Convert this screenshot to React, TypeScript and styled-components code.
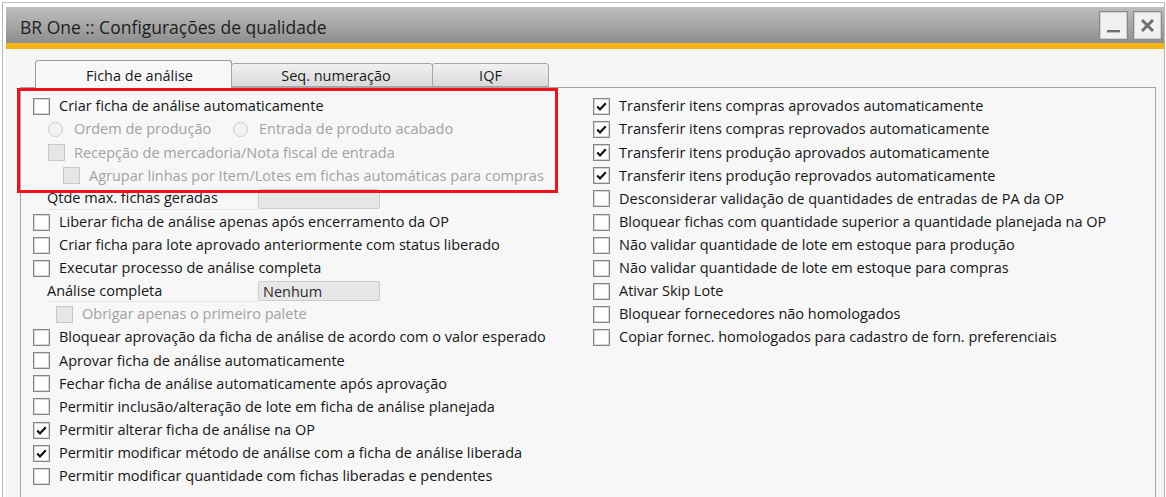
import React from 'react';
import styled, { createGlobalStyle } from 'styled-components';

const Global = createGlobalStyle`
  html, body { margin: 0; padding: 0; background: #ffffff; }
  body { font-family: "Open Sans", "Noto Sans", sans-serif; overflow: hidden; }
  #root { width: 1166px; height: 497px; }
  * { box-sizing: border-box; }
`;

const Window = styled.div`
  margin: 2px 1px 0 2px;
  height: 495px;
  border-left: 1px solid #b6b6b6;
  border-top: 1px solid #c6c6c6;
  border-right: 1px solid #b6b6b6;
  padding: 4px 0 0 3px;
  display: flex;
  flex-direction: column;
  background: #ffffff;
`;

const TitleBar = styled.div`
  height: 42px;
  flex: none;
  display: flex;
  align-items: center;
  padding: 0 2px 0 14px;
  background: linear-gradient(#bebebe, #8e8e8e);
  border-bottom: 6px solid #f5b518;
`;

const Title = styled.div`
  font-size: 17.5px;
  color: #1e1e1e;
  padding-top: 4px;
`;

const WinButtons = styled.div`
  margin-left: auto;
  display: flex;
  gap: 5px;
  padding-top: 1px;
`;

const WinButton = styled.div`
  width: 29px;
  height: 29px;
  background: #f1f1f1;
  border: 1px solid #8a8a8a;
  box-shadow: inset 0 0 0 1px #d0d0d0;
  display: flex;
  align-items: center;
  justify-content: center;
`;

const Body = styled.div`
  flex: 1;
  background: #f5f5f5;
  padding: 11px 8px 0 14px;
  display: flex;
  flex-direction: column;
  min-height: 0;
`;

const TabStrip = styled.div`
  display: flex;
  align-items: flex-end;
  padding-left: 15px;
  height: 28px;
  margin-bottom: -1px;
  position: relative;
  z-index: 1;
`;

const Tab = styled.div<{ $w: number; $active?: boolean; $shift?: number }>`
  width: ${(p) => p.$w}px;
  height: ${(p) => (p.$active ? 28 : 24)}px;
  margin-bottom: ${(p) => (p.$active ? 0 : 1)}px;
  margin-left: ${(p) => (p.$active ? 0 : -1)}px;
  border: 1px solid ${(p) => (p.$active ? '#9c9c9c' : '#a6a6a6')};
  border-bottom: ${(p) => (p.$active ? 'none' : '1px solid #a6a6a6')};
  border-radius: 3px 3px 0 0;
  background: ${(p) => (p.$active ? '#f7f7f7' : 'linear-gradient(#f1f1f1, #dadada)')};
  display: flex;
  align-items: center;
  justify-content: center;
  font-size: 14.5px;
  color: #1a1a1a;
  padding-top: ${(p) => (p.$active ? 1 : 0)}px;
  padding-left: ${(p) => p.$shift ?? 0}px;
`;

const Panel = styled.div`
  flex: 1;
  position: relative;
  border: 1px solid #a3a3a3;
  border-bottom: none;
  background: #f7f7f7;
  display: grid;
  grid-template-columns: 560px 1fr;
  align-content: start;
  padding: 7px 0 0 12px;
`;

const Column = styled.div`
  display: flex;
  flex-direction: column;
`;

const Row = styled.div<{ $indent?: number }>`
  height: 23.12px;
  display: flex;
  align-items: center;
  padding-left: ${(p) => p.$indent ?? 0}px;
  font-size: 14.5px;
  white-space: nowrap;
`;

const Label = styled.span<{ $disabled?: boolean }>`
  color: ${(p) => (p.$disabled ? '#a2a2a2' : '#161616')};
  margin-left: 9px;
  line-height: 1;
`;

const Box = styled.span<{ $disabled?: boolean }>`
  width: 17px;
  height: 17px;
  flex: none;
  border: 1px solid ${(p) => (p.$disabled ? '#c8c8c8' : '#858585')};
  background: ${(p) => (p.$disabled ? '#e6e6e6' : '#ffffff')};
  box-shadow: ${(p) => (p.$disabled ? 'none' : 'inset 0 0 0 1px #d6d6d6')};
  display: flex;
  align-items: center;
  justify-content: center;
`;

const Radio = styled.span`
  width: 15px;
  height: 15px;
  flex: none;
  border-radius: 50%;
  border: 1px solid #c9c9c9;
  background: #f3f3f3;
`;

const RadioOption = styled.span<{ $w?: number }>`
  display: flex;
  align-items: center;
  width: ${(p) => (p.$w ? `${p.$w}px` : 'auto')};
  & > span:last-child { margin-left: 11px; }
`;

const FieldLabel = styled.span`
  width: 211px;
  align-self: stretch;
  display: flex;
  align-items: center;
  color: #161616;
  border-bottom: 1px solid #e4e4e4;
  margin-bottom: 1px;
`;

const Input = styled.span`
  width: 122px;
  height: 20px;
  background: #e7e7e7;
  border: 1px solid #cdcdcd;
  border-radius: 2px;
  display: flex;
  align-items: center;
  padding-left: 4px;
  color: #2a2a2a;
`;

const Highlight = styled.div`
  position: absolute;
  left: -4px;
  top: 0;
  width: 541px;
  height: 105px;
  border: 3px solid #f2121b;
  pointer-events: none;
`;

const Check = () => (
  <svg width="13" height="13" viewBox="0 0 13 13">
    <path d="M2.2 6.6 L5 9.5 L10.8 3.2" fill="none" stroke="#111" strokeWidth="2.2" />
  </svg>
);

type CbProps = { label: string; checked?: boolean; disabled?: boolean; indent?: number };

const CheckRow = ({ label, checked, disabled, indent }: CbProps) => (
  <Row $indent={indent}>
    <Box $disabled={disabled}>{checked && <Check />}</Box>
    <Label $disabled={disabled}>{label}</Label>
  </Row>
);

const FieldRow = ({ label, value }: { label: string; value?: string }) => (
  <Row $indent={14}>
    <FieldLabel>{label}</FieldLabel>
    <Input>{value}</Input>
  </Row>
);

const rightItems: [string, boolean][] = [
  ['Transferir itens compras aprovados automaticamente', true],
  ['Transferir itens compras reprovados automaticamente', true],
  ['Transferir itens produção aprovados automaticamente', true],
  ['Transferir itens produção reprovados automaticamente', true],
  ['Desconsiderar validação de quantidades de entradas de PA da OP', false],
  ['Bloquear fichas com quantidade superior a quantidade planejada na OP', false],
  ['Não validar quantidade de lote em estoque para produção', false],
  ['Não validar quantidade de lote em estoque para compras', false],
  ['Ativar Skip Lote', false],
  ['Bloquear fornecedores não homologados', false],
  ['Copiar fornec. homologados para cadastro de forn. preferenciais', false],
];

export default function App() {
  return (
    <>
      <Global />
      <Window>
        <TitleBar>
          <Title>BR One :: Configurações de qualidade</Title>
          <WinButtons>
            <WinButton>
              <svg width="17" height="17" viewBox="0 0 17 17">
                <rect x="2" y="13" width="13" height="2.4" fill="#6e6e6e" />
              </svg>
            </WinButton>
            <WinButton>
              <svg width="17" height="17" viewBox="0 0 17 17">
                <path d="M3 3 L14 14 M14 3 L3 14" stroke="#6e6e6e" strokeWidth="3" />
              </svg>
            </WinButton>
          </WinButtons>
        </TitleBar>
        <Body>
          <TabStrip>
            <Tab $w={197} $active $shift={12}>Ficha de análise</Tab>
            <Tab $w={202} $shift={8}>Seq. numeração</Tab>
            <Tab $w={117}>IQF</Tab>
          </TabStrip>
          <Panel>
            <Column>
              <CheckRow label="Criar ficha de análise automaticamente" />
              <Row $indent={15}>
                <RadioOption $w={185}>
                  <Radio />
                  <Label $disabled>Ordem de produção</Label>
                </RadioOption>
                <RadioOption>
                  <Radio />
                  <Label $disabled>Entrada de produto acabado</Label>
                </RadioOption>
              </Row>
              <CheckRow disabled indent={15} label="Recepção de mercadoria/Nota fiscal de entrada" />
              <CheckRow disabled indent={30} label="Agrupar linhas por Item/Lotes em fichas automáticas para compras" />
              <FieldRow label="Qtde max. fichas geradas" />
              <CheckRow label="Liberar ficha de análise apenas após encerramento da OP" />
              <CheckRow label="Criar ficha para lote aprovado anteriormente com status liberado" />
              <CheckRow label="Executar processo de análise completa" />
              <FieldRow label="Análise completa" value="Nenhum" />
              <CheckRow disabled indent={23} label="Obrigar apenas o primeiro palete" />
              <CheckRow label="Bloquear aprovação da ficha de análise de acordo com o valor esperado" />
              <CheckRow label="Aprovar ficha de análise automaticamente" />
              <CheckRow label="Fechar ficha de análise automaticamente após aprovação" />
              <CheckRow label="Permitir inclusão/alteração de lote em ficha de análise planejada" />
              <CheckRow checked label="Permitir alterar ficha de análise na OP" />
              <CheckRow checked label="Permitir modificar método de análise com a ficha de análise liberada" />
              <CheckRow label="Permitir modificar quantidade com fichas liberadas e pendentes" />
            </Column>
            <Column>
              {rightItems.map(([label, checked]) => (
                <CheckRow key={label} label={label} checked={checked} />
              ))}
            </Column>
            <Highlight />
          </Panel>
        </Body>
      </Window>
    </>
  );
}
